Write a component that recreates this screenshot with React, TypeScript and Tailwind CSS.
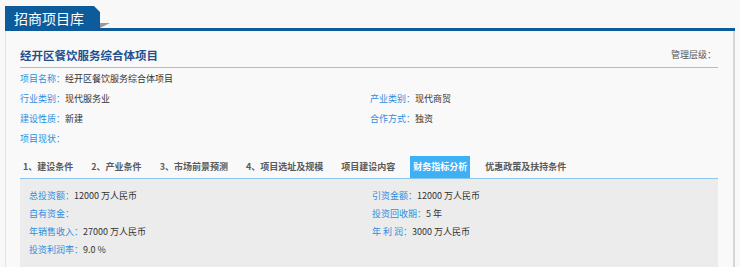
const font = { fontFamily: '"Noto Sans CJK SC", "Noto Sans", sans-serif' };

const Field = ({ label, value }: { label: string; value?: string }) => (
  <div className="whitespace-nowrap">
    <span className="text-[#2f8ee0]">{label}：</span>
    <span className="text-[#333]">{value}</span>
  </div>
);

const tabs = [
  "1、建设条件",
  "2、产业条件",
  "3、市场前景预测",
  "4、项目选址及规模",
  "项目建设内容",
  "财务指标分析",
  "优惠政策及扶持条件",
];

export default function App() {
  return (
    <div
      className="w-[740px] h-[267px] overflow-hidden bg-[#f8f8f8] pl-[5px] pr-[5px] pt-[5px]"
      style={font}
    >
      {/* header */}
      <div className="flex items-end h-[26px]">
        <div
          className="h-[25px] w-[95px] bg-[#0e5b9b] text-white text-[14px] leading-[25px] pl-[9px]"
          style={{ clipPath: "polygon(0 0, 89px 0, 95px 6px, 95px 100%, 0 100%)" }}
        >
          招商项目库
        </div>
        <div className="flex-1 flex flex-col">
          <div
            className="w-[10px] h-[5px] bg-[#9a9a9a]"
            style={{ clipPath: "polygon(0 0, 100% 0, 0 100%)" }}
          />
          <div className="h-[3px] bg-[#0e5b9b]" />
        </div>
      </div>

      {/* panel */}
      <div className="h-[240px] bg-[#f9f9f9] border-l border-l-[#e2e2e2] border-r-2 border-r-[#d6d6d6] pl-[14px] pr-[15px]">
        <div className="flex items-center justify-between pt-[16px] pb-[4px] border-b border-[#93c6ef]">
          <div className="text-[11.5px] leading-[16px] font-bold text-[#1f4f8d]">经开区餐饮服务综合体项目</div>
          <div className="text-[9px] text-[#555] pr-[2px]">管理层级：</div>
        </div>

        <div className="grid grid-cols-[350px_1fr] text-[9px] leading-[20px] pt-[1px]">
          <Field label="项目名称" value="经开区餐饮服务综合体项目" />
          <div />
          <Field label="行业类别" value="现代服务业" />
          <Field label="产业类别" value="现代商贸" />
          <Field label="建设性质" value="新建" />
          <Field label="合作方式" value="独资" />
          <Field label="项目现状" />
        </div>

        <div className="mt-[7px] flex gap-[12px] border-b border-[#8ec5ef] text-[9px] font-bold">
          {tabs.map((t) => (
            <div
              key={t}
              className={
                t === "财务指标分析"
                  ? "h-[22px] leading-[22px] px-[3px] bg-[#3fb0f6] text-white"
                  : "h-[22px] leading-[22px] px-[3px] text-[#5a5a5a]"
              }
            >
              {t}
            </div>
          ))}
        </div>

        <div className="bg-[#ececec] h-[100px] pt-[8px] pl-[9px] grid grid-cols-[343px_1fr] auto-rows-[18px] text-[9px] leading-[18px]">
          <Field label="总投资额" value="12000 万人民币" />
          <Field label="引资金额" value="12000 万人民币" />
          <Field label="自有资金" />
          <Field label="投资回收期" value="5 年" />
          <Field label="年销售收入" value="27000 万人民币" />
          <Field label="年 利 润" value="3000 万人民币" />
          <Field label="投资利润率" value="9.0 %" />
        </div>
      </div>
    </div>
  );
}
